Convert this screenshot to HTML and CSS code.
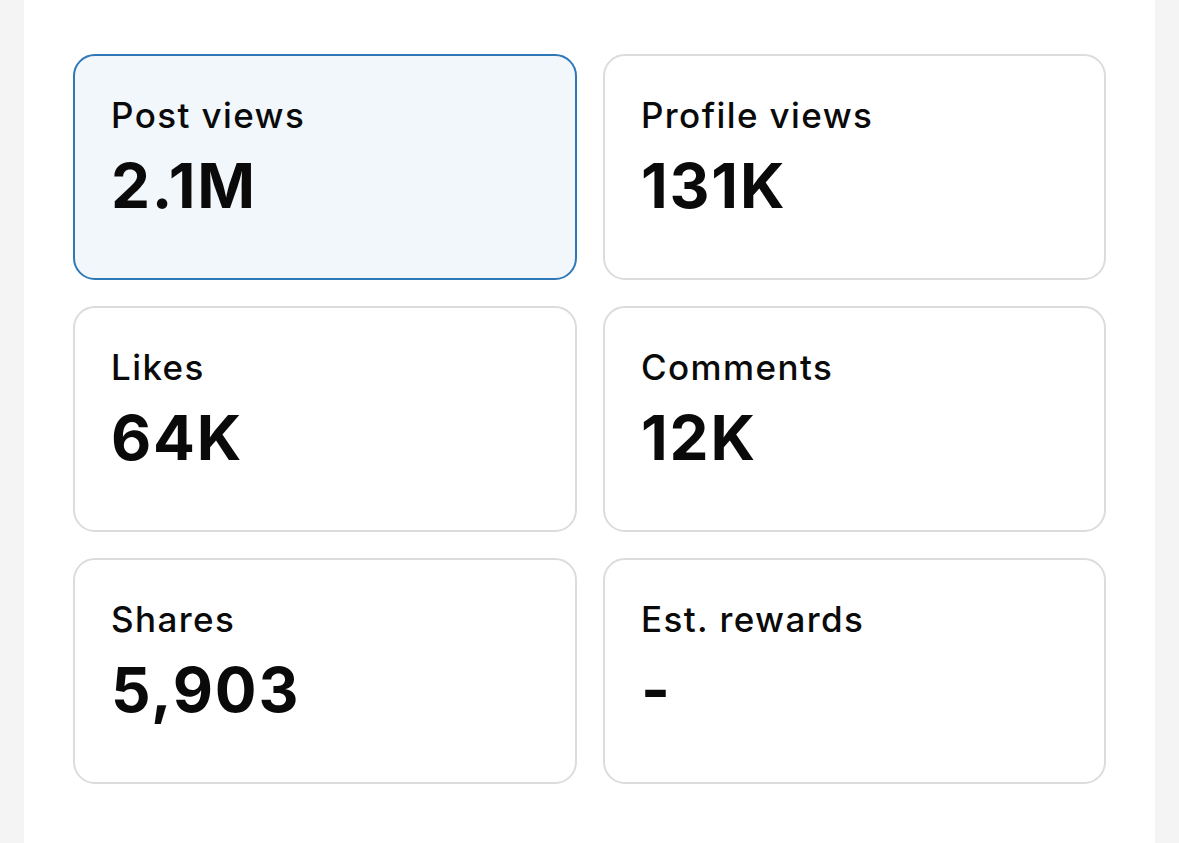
FILE: index.html
```html
<!DOCTYPE html>
<html>
<head>
<meta charset="utf-8">
<link rel="stylesheet" href="styles.css">
</head>
<body>
<div class="panel">
  <div class="grid">
    <div class="card card-active"><div class="label">Post views</div><div class="value">2.1M</div></div>
    <div class="card"><div class="label">Profile views</div><div class="value">131K</div></div>
    <div class="card"><div class="label">Likes</div><div class="value">64K</div></div>
    <div class="card"><div class="label">Comments</div><div class="value">12K</div></div>
    <div class="card"><div class="label">Shares</div><div class="value">5,903</div></div>
    <div class="card"><div class="label">Est. rewards</div><div class="value">-</div></div>
  </div>
</div>
</body>
</html>
```
FILE: styles.css
```css
html, body {
  margin: 0;
  padding: 0;
  background: #f4f4f4;
  height: 100%;
}
.panel {
  margin-left: 24px;
  width: 1131px;
  min-height: 843px;
  background: #ffffff;
  box-sizing: border-box;
  padding: 54px 0 0 49px;
}
.grid {
  display: grid;
  grid-template-columns: 504px 503px;
  grid-auto-rows: 226px;
  column-gap: 26px;
  row-gap: 26px;
}
.card {
  box-sizing: border-box;
  border: 2px solid #dcdcdc;
  border-radius: 22px;
  background: #ffffff;
  padding: 35px 36px 0 36px;
  font-family: Inter, "Noto Sans", sans-serif;
  color: #0a0a0a;
}
.card-active {
  border-color: #2f78b7;
  background: #f2f7fb;
}
.label {
  font-size: 35px;
  font-weight: 500;
  line-height: 48px;
  letter-spacing: 1.4px;
}
.value {
  margin-top: 11px;
  font-size: 62px;
  font-weight: 700;
  line-height: 72px;
  letter-spacing: 1.8px;
}
```
